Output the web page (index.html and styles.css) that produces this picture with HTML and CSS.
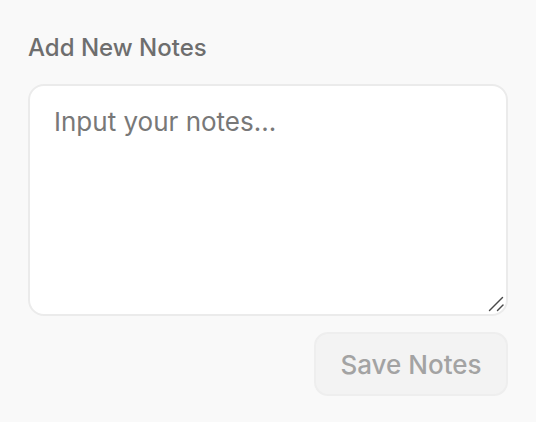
FILE: index.html
```html
<!DOCTYPE html>
<html>
<head>
<meta charset="utf-8">
<link rel="stylesheet" href="styles.css">
</head>
<body>
<div class="panel">
  <label class="label" for="notes">Add New Notes</label>
  <div class="field">
    <textarea id="notes" class="notes" placeholder="Input your notes..."></textarea>
    <svg class="grip" width="16" height="16" viewBox="0 0 16 16" aria-hidden="true">
      <line x1="1.5" y1="14.5" x2="14.5" y2="1.5" stroke="#4a4a4a" stroke-width="1.4" stroke-linecap="round"/>
      <line x1="9.5" y1="14.5" x2="15" y2="9" stroke="#4a4a4a" stroke-width="1.4" stroke-linecap="round"/>
    </svg>
  </div>
  <div class="actions">
    <button class="save" disabled>Save Notes</button>
  </div>
</div>
</body>
</html>
```
FILE: styles.css
```css
html, body {
  margin: 0;
  padding: 0;
  background: #f9f9f9;
  font-family: Inter, "Noto Sans", sans-serif;
}
.panel {
  padding: 34px 28px 0 28px;
  display: flex;
  flex-direction: column;
}
.label {
  font-size: 24px;
  line-height: 28px;
  color: #6e6e6e;
  font-weight: 500;
  margin-left: 0;
}
.field {
  position: relative;
  margin-top: 22px;
  width: 480px;
  height: 232px;
}
.notes {
  display: block;
  box-sizing: border-box;
  width: 480px;
  height: 232px;
  margin: 0;
  border: 2px solid #ebebeb;
  border-radius: 16px;
  background: #ffffff;
  padding: 20px 24px;
  font-family: Inter, "Noto Sans", sans-serif;
  font-size: 26px;
  line-height: 32px;
  color: #333;
  outline: none;
  resize: none;
}
.notes::placeholder {
  color: #787878;
}
.grip {
  position: absolute;
  right: 4px;
  bottom: 4px;
  pointer-events: none;
}
.actions {
  display: flex;
  justify-content: flex-end;
  margin-top: 16px;
}
.save {
  box-sizing: border-box;
  width: 194px;
  height: 64px;
  border: 2px solid #eeeeee;
  border-radius: 14px;
  background: #f3f3f3;
  color: #a3a3a3;
  font-family: Inter, "Noto Sans", sans-serif;
  font-size: 26px;
  font-weight: 500;
  padding: 0;
}
```
